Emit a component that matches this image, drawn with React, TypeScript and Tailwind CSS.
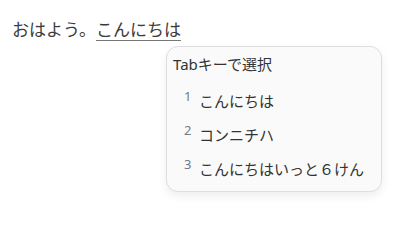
import React from "react";

const candidates = ["こんにちは", "コンニチハ", "こんにちはいっと６けん"];

const App = () => {
  return (
    <div
      className="relative w-[399px] h-[218px] bg-white text-[#3b3b3b]"
      style={{ fontFamily: '"Noto Sans", "Noto Sans CJK JP", sans-serif' }}
    >
      <div className="pl-[12px] pt-[19px] text-[17px] leading-[22px]">
        おはよう。
        <span className="underline decoration-[#777] underline-offset-[4px]">こんにちは</span>
      </div>

      <div className="absolute left-[166px] top-[46px] w-[216px] h-[146px] rounded-[12px] border border-[#dedede] bg-[#fafafa] shadow-[0_4px_10px_rgba(0,0,0,0.07)]">
        <div className="pl-[6px] pt-[7px] text-[15px] leading-[20px] text-[#333]">Tabキーで選択</div>
        <ul className="mt-[10px]">
          {candidates.map((c, i) => (
            <li key={i} className="flex items-center h-[34px] pl-[17px]">
              <span className="w-[15px] self-start mt-[6px] text-[13px] leading-[13px] text-[#6f7c88]">{i + 1}</span>
              <span className="text-[15px] leading-[20px] text-[#333]">{c}</span>
            </li>
          ))}
        </ul>
      </div>
    </div>
  );
};

export default App;
